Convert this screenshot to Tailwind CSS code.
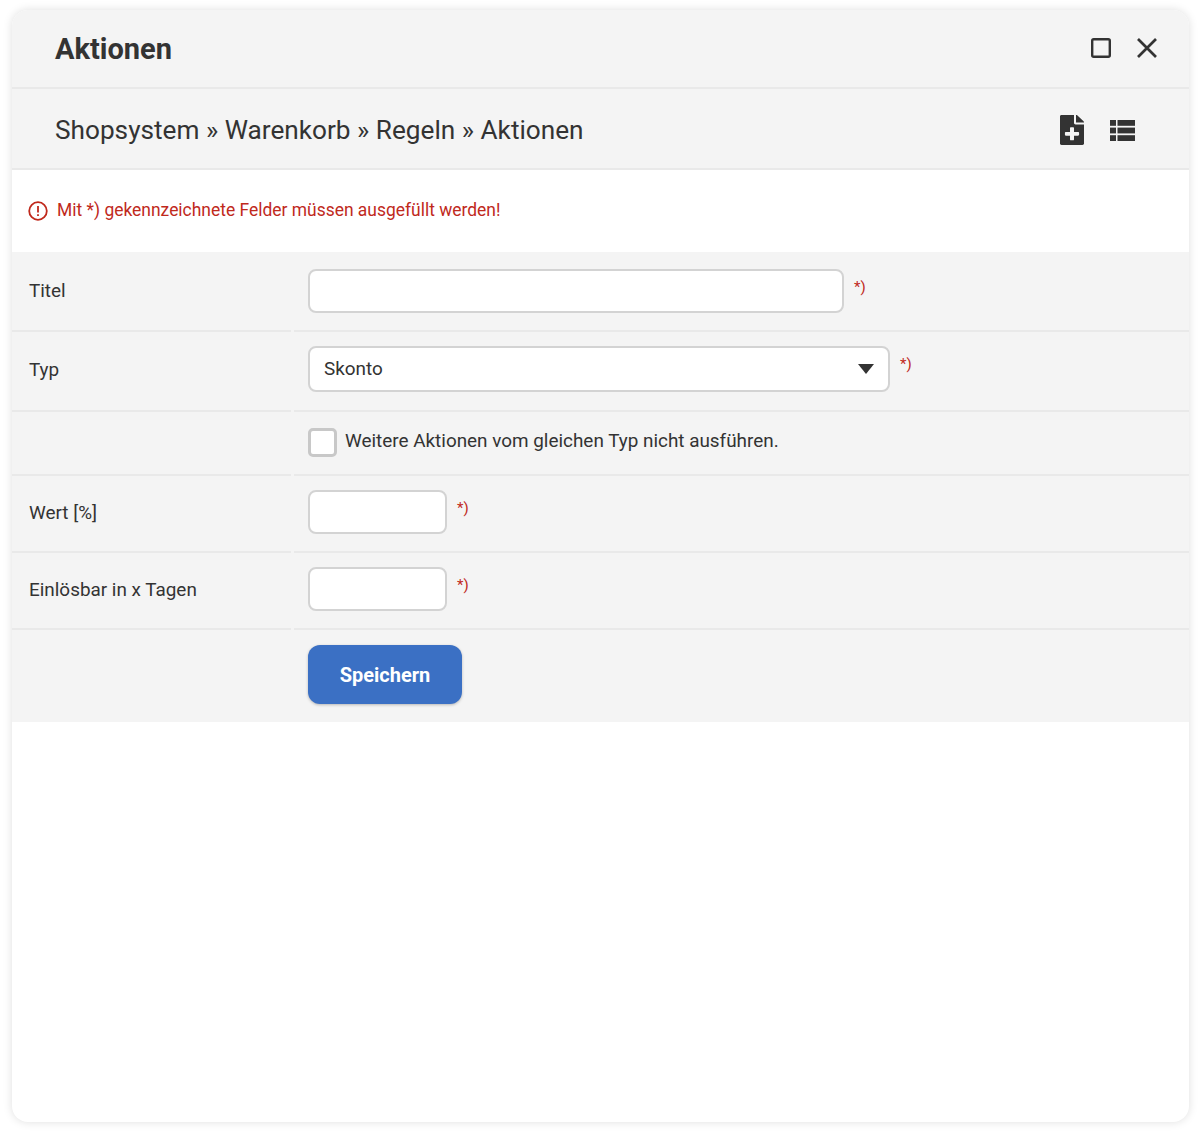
<!DOCTYPE html>
<html lang="de">
  <head>
    <meta charset="UTF-8" />
    <title>Aktionen</title>
    <script src="https://cdn.jsdelivr.net/npm/@tailwindcss/browser@4"></script>
  </head>
  <body class="bg-white h-[1135px] overflow-hidden font-['Roboto',sans-serif] text-[#333]">
    <div class="ml-[12px] mt-[10px] w-[1177px] h-[1112px] bg-white rounded-[16px] shadow-[0_0_10px_rgba(0,0,0,0.13)] overflow-hidden flex flex-col">
      <!-- Title bar -->
      <div class="h-[79px] shrink-0 bg-[#f4f4f4] border-b-2 border-[#e9e9e9] flex items-center justify-between pl-[43px] pr-[30px]">
        <h1 class="text-[29px] font-bold leading-none mt-[2px]">Aktionen</h1>
        <div class="flex items-center gap-[23px] -mt-[2px]">
          <svg class="w-[22px] h-[22px]" viewBox="0 0 22 22" fill="none" stroke="#333" stroke-width="2.4"><rect x="2.2" y="2.2" width="17.6" height="17.6" rx="1.5" /></svg>
          <svg class="w-[24px] h-[24px]" viewBox="0 0 24 24" fill="none" stroke="#333" stroke-width="2.7"><path d="M3 3 L21 21 M21 3 L3 21" /></svg>
        </div>
      </div>

      <!-- Breadcrumb -->
      <div class="h-[81px] shrink-0 bg-[#f4f4f4] border-b-2 border-[#e9e9e9] flex items-center justify-between pl-[43px] pr-[54px]">
        <h2 class="text-[26.2px] leading-none mt-[3px]">Shopsystem » Warenkorb » Regeln » Aktionen</h2>
        <div class="flex items-center gap-[26px] mt-[3px]">
          <svg class="w-[24px] h-[30px]" viewBox="0 0 384 512" preserveAspectRatio="none" fill="#333"><path d="M224 136V0H24C10.700 0 0 10.700 0 24v464c0 13.300 10.700 24 24 24h336c13.300 0 24-10.700 24-24V160H248c-13.200 0-24-10.800-24-24zm65.200 216H224v64c0 8.800-7.200 16-16 16h-32c-8.800 0-16-7.200-16-16v-64H94.800c-8.800 0-16-7.200-16-16v-32c0-8.800 7.200-16 16-16H160v-64c0-8.800 7.200-16 16-16h32c8.800 0 16 7.200 16 16v64h65.200c8.800 0 16 7.200 16 16v32c0 8.800-7.200 16-16 16zM384 121.900V128H256V0h6.100c6.400 0 12.500 2.500 17 7l97.900 98c4.500 4.500 7 10.600 7 16.900z" /></svg>
          <svg class="w-[25px] h-[21px]" viewBox="0 0 25 21" fill="#333"><rect x="0" y="0" width="6" height="5.800" /><rect x="7.500" y="0" width="17.500" height="5.800" /><rect x="0" y="7.600" width="6" height="5.800" /><rect x="7.500" y="7.600" width="17.500" height="5.800" /><rect x="0" y="15.200" width="6" height="5.800" /><rect x="7.500" y="15.200" width="17.500" height="5.800" /></svg>
        </div>
      </div>

      <!-- Hint -->
      <div class="h-[82px] shrink-0 flex items-center pl-[16px] text-[17.45px] text-[#c0291c]">
        <svg class="w-[20px] h-[20px] mr-[9px]" viewBox="0 0 20 20" fill="none" stroke="#c0291c" stroke-width="1.800"><circle cx="10" cy="10" r="8.800" /><path d="M10 5 V11.500 M10 13.300 V15" /></svg>
        <span class="-mt-[2px]">Mit *) gekennzeichnete Felder müssen ausgefüllt werden!</span>
      </div>

      <!-- Form -->
      <div class="bg-[#f4f4f4] text-[18.9px]">
        <div class="flex h-[80px]">
          <div class="w-[279px] shrink-0 border-b-2 border-[#e9e9e9] pl-[17px] pt-[27px] leading-[24px]">Titel</div>
          <div class="flex-1 ml-[3px] border-b-2 border-[#e9e9e9] pl-[14px] pt-[17px] flex items-start">
            <input type="text" class="w-[536px] h-[44px] bg-white border-2 border-[#d3d3d3] rounded-[8px]" />
            <span class="ml-[10px] text-[#c0291c] text-[15px] leading-[18px] mt-[9px]">*)</span>
          </div>
        </div>
        <div class="flex h-[80px]">
          <div class="w-[279px] shrink-0 border-b-2 border-[#e9e9e9] pl-[17px] pt-[26px] leading-[24px]">Typ</div>
          <div class="flex-1 ml-[3px] border-b-2 border-[#e9e9e9] pl-[14px] pt-[14px] flex items-start">
            <div class="w-[582px] h-[46px] bg-white border-2 border-[#d3d3d3] rounded-[8px] flex items-center justify-between pl-[14px] pr-[14px]">
              <span class="mt-[1px]">Skonto</span>
              <svg class="w-[16px] h-[10px]" viewBox="0 0 16 10" fill="#333"><path d="M0 0 H16 L8 10 Z" /></svg>
            </div>
            <span class="ml-[10px] text-[#c0291c] text-[15px] leading-[18px] mt-[9px]">*)</span>
          </div>
        </div>
        <div class="flex h-[64px]">
          <div class="w-[279px] shrink-0 border-b-2 border-[#e9e9e9]"></div>
          <div class="flex-1 ml-[3px] border-b-2 border-[#e9e9e9] pl-[14px] pt-[16px] flex items-start">
            <span class="w-[29px] h-[29px] bg-white border-[3px] border-[#c8c8c8] rounded-[5px]"></span>
            <span class="ml-[8px] leading-[24px] mt-[1px]">Weitere Aktionen vom gleichen Typ nicht ausführen.</span>
          </div>
        </div>
        <div class="flex h-[77px]">
          <div class="w-[279px] shrink-0 border-b-2 border-[#e9e9e9] pl-[17px] pt-[25px] leading-[24px]">Wert [%]</div>
          <div class="flex-1 ml-[3px] border-b-2 border-[#e9e9e9] pl-[14px] pt-[14px] flex items-start">
            <input type="text" class="w-[139px] h-[44px] bg-white border-2 border-[#d3d3d3] rounded-[8px]" />
            <span class="ml-[10px] text-[#c0291c] text-[15px] leading-[18px] mt-[9px]">*)</span>
          </div>
        </div>
        <div class="flex h-[77px]">
          <div class="w-[279px] shrink-0 border-b-2 border-[#e9e9e9] pl-[17px] pt-[25px] leading-[24px]">Einlösbar in x Tagen</div>
          <div class="flex-1 ml-[3px] border-b-2 border-[#e9e9e9] pl-[14px] pt-[14px] flex items-start">
            <input type="text" class="w-[139px] h-[44px] bg-white border-2 border-[#d3d3d3] rounded-[8px]" />
            <span class="ml-[10px] text-[#c0291c] text-[15px] leading-[18px] mt-[9px]">*)</span>
          </div>
        </div>
        <div class="h-[92px] pl-[296px] pt-[15px]">
          <button class="w-[154px] h-[59px] bg-[#3b70c4] text-white font-bold text-[20px] rounded-[12px] shadow-[0_1px_3px_rgba(0,0,0,0.25)]">Speichern</button>
        </div>
      </div>
    </div>
  </body>
</html>
